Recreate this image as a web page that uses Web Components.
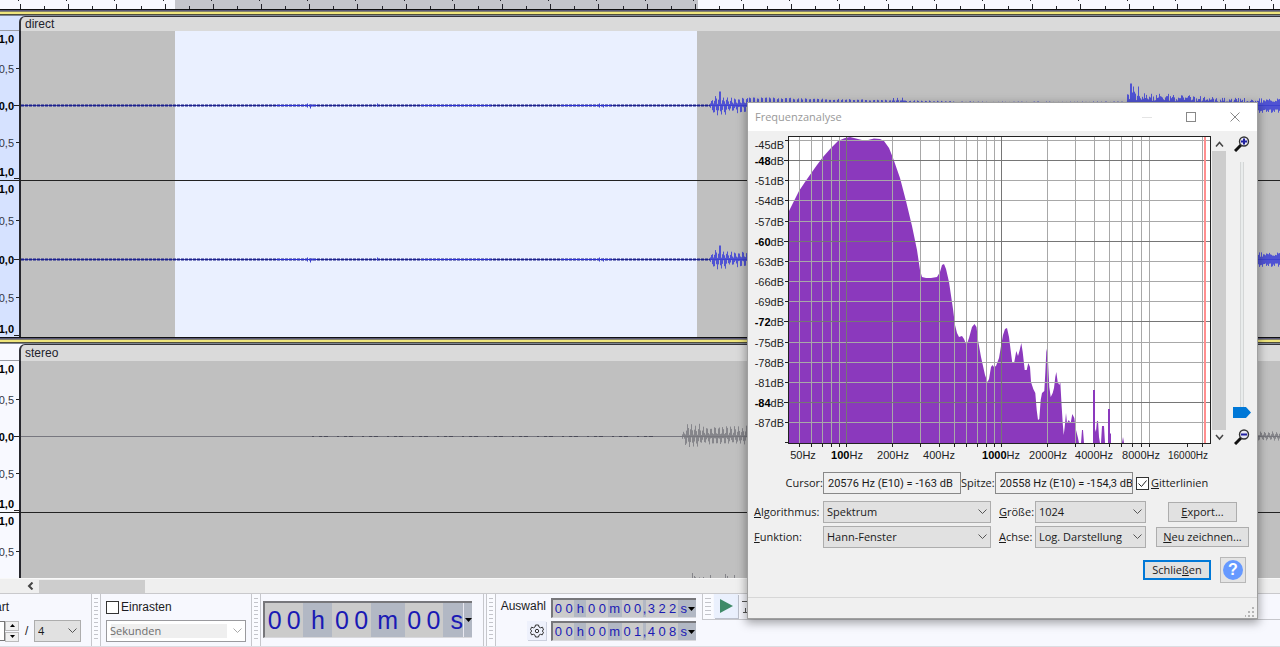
<!DOCTYPE html>
<html lang="de">
<head>
<meta charset="utf-8">
<title>Frequenzanalyse</title>
<style>
html, body { margin: 0; height: 100%; }
body { font: 12px/16px "Liberation Sans", Arial, sans-serif; color: #1b1b22; overflow: hidden; }
</style>
</head>
<body>
<audio-editor></audio-editor>
<script>
const define = (name, html, setup) => customElements.define(name, class extends HTMLElement {
  connectedCallback() {
    if (this.shadowRoot) return;
    const t = document.createElement('template');
    t.innerHTML = html;
    this.attachShadow({ mode: 'open' }).append(t.content.cloneNode(true));
    if (setup) setup(this, this.shadowRoot);
  }
});

/* Repeatable pseudo random numbers for the waveforms. */
const noise = seed => () => (seed = (seed * 16807) % 2147483647) / 2147483647;

/* ---------- time ruler ---------- */
define('time-ruler', `
<style>
:host { display: block; height: 9px; flex: none; background: #f8f9ff; }
svg { display: block; width: 100%; height: 9px; }
</style>
<svg aria-hidden="true"><rect x="175" width="523" height="9" fill="#c4c5cb"/><path stroke="#22222a" fill="none"/></svg>`,
(host, root) => {
  let d = '';
  for (let i = 0; i < 90; i++) {
    const x = Math.round(20.5 + i * 24.1 - .5) + .5;
    d += i % 2 ? `M${x} 6V9` : `M${x} 4V9M${x - 2} 0V1`;
  }
  root.querySelector('path').setAttribute('d', d);
});

/* ---------- one channel of a track: scale and waveform ---------- */
define('wave-channel', `
<style>
:host { display: flex; box-sizing: border-box; }
.scale { width: 19px; flex: none; height: 100%; background: var(--scale-bg); border-right: 2px solid #26262c; box-sizing: content-box; }
.wave { flex: 1; min-width: 0; height: 100%; background: #c0c0c0; }
text { font-size: 11px; text-anchor: end; fill: #33363f; }
.b { font-weight: bold; fill: #000; }
</style>
<svg class="scale"></svg><svg class="wave" aria-hidden="true"></svg>`,
(host, root) => {
  const h = +host.getAttribute('span'), mid = Math.floor(h / 2), kind = host.getAttribute('kind');
  const rows = [[7, '1,0', 1], [Math.round(h / 4), '0,5', 0], [mid, '0,0', 1], [Math.round(h * 3 / 4) - 1, '0,5', 0], [h - 9, '1,0', 1]]
    .slice(0, +(host.getAttribute('labels') || 5));
  let s = '';
  for (const [y, t, b] of rows) {
    s += `<text x="14" y="${y + 5}" class="${b ? 'b' : ''}">${t}</text>`;
    if (t !== '1,0') s += `<path d="M${b ? 14 : 16} ${y + .5}H19" stroke="#222"/>`;
  }
  s += `<path d="M14 ${h - 1.5}H19" stroke="#222"/>`;
  root.querySelector('.scale').innerHTML = s;
  const rnd = noise(77);
  const c = mid + .5;
  let w = '', body = '';
  if (kind === 'direct') {
    w += '<rect x="154" width="522" height="100%" fill="#eaf0ff"/>';
    w += `<path d="M0 ${c}H1300" stroke="#4a4fa8"/>`;
    w += `<path d="M0 ${c}H689" stroke="#1a1f8c" stroke-width="2" stroke-dasharray="3 1"/><path d="M255 ${c}H296M540 ${c}H590M400 ${c}H470" stroke="#2a2fd0"/>`;
    w += `<path d="M286.500 ${c - 2}v4M289.500 ${c - 1}v4M291.500 ${c - 1}v2M356.500 ${c - 2}v3M578.500 ${c - 2}v4M582.500 ${c - 1}v3" stroke="#3a3fd0"/>`;
    for (let x = 689; x < 1300; x++) {
      let up, dn;
      if (x < 728) {
        const beat = .5 + .5 * Math.cos((x - 698) * 1.6);
        const env = x < 691 ? 6 : x < 706 ? 11 : 9;
        up = env * (.2 + .8 * beat) * (.7 + .3 * rnd()); dn = env * (.1 + .9 * (1 - beat)) * (.5 + .5 * rnd());
        if (x === 698 || x === 699) up = 14;
      } else if (x < 1106) {
        const env = 8.500 - Math.min(4.500, (x - 728) * .02);
        up = x % 4 < 2 ? env * (.8 + .2 * rnd()) : 2; dn = up * .8;
        if (x > 870 && x < 890 && rnd() > .7) up += 3;
      } else {
        const env = Math.max(9, 17 - (x - 1106) * .08);
        up = env * (.3 + .55 * rnd()); dn = Math.max(4, env * (.3 + .55 * rnd()));
        if (x === 1109 || x === 1110) up = 22;
        if (x === 1112 || x === 1117) up = 19;
      }
      body += `M${x + .5} ${(c - up).toFixed(1)}V${(c + dn).toFixed(1)}`;
    }
    w += `<path d="${body}" stroke="#3c3fd6" stroke-opacity=".85"/>`;
  } else {
    w += `<path d="M0 ${c}H1300" stroke="#77777f"/>`;
    w += `<path d="M291 ${c}H640" stroke="#4b4b58" stroke-dasharray="2 5 3 2 4 9"/>`;
    const start = host.hasAttribute('late') ? 669 : 661;
    for (let x = start; x < 1300; x++) {
      const beat = .5 + .5 * Math.cos((x - 670) * 1.6);
      const env = x < 664 ? 6 : x < 680 ? 14 : 11;
      const far = x > 1200 ? .5 : 1;
      body += `M${x + .5} ${(c - far * env * (.15 + .85 * beat) * (.75 + .25 * rnd())).toFixed(1)}V${(c + far * env * (.1 + .8 * (1 - beat)) * (.6 + .3 * rnd())).toFixed(1)}`;
    }
    w += `<path d="${body}" stroke="#77777d" stroke-opacity=".8"/>`;
    if (host.hasAttribute('late')) w += '<path d="M671.500 60v6M673.500 63v3M682.500 64v2M689.500 62v4M704.500 61v5M706.500 63v3M713.500 62v4" stroke="#85858a"/>';
  }
  root.querySelector('.wave').innerHTML = w;
});

/* ---------- audio track with its name bar ---------- */
define('audio-track', `
<style>
:host { display: block; flex: none; }
.focus { height: 7px; background: linear-gradient(#111 0 1px, #5a5878 1px 2px, #85826c 2px 3px, #efe57c 3px 5px, #504e3c 5px 6px, #7d8490 6px 7px); }
.bar { display: flex; height: var(--bar, 15px); background: var(--scale-bg); }
.corner { width: 19px; flex: none; border-bottom: 1px solid #9a9ca4; }
.name { flex: 1; background: #dadada; border-top: 1px solid #33333a; border-left: 2px solid #33333a; border-top-left-radius: 6px; padding-left: 4px; line-height: var(--bar, 15px); color: #22222c; }
</style>
<div class="focus"></div>
<div class="bar"><div class="corner"></div><div class="name"><slot name="title"></slot></div></div>
<slot></slot>`);

/* ---------- horizontal scroll bar ---------- */
define('scroll-strip', `
<style>
:host { display: flex; flex: none; height: 16px; box-sizing: border-box; background: #efefef; border-top: 1px solid #f8f8f8; border-bottom: 1px solid #c9c9cc; padding-left: 22px; align-items: center; }
button { width: 17px; height: 14px; border: 0; padding: 0; background: none; display: grid; place-items: center; }
i { width: 106px; height: 13px; background: #cdcdcd; }
</style>
<button aria-label="Nach links"><svg width="7" height="8"><path d="M5.500 .5L2 4l3.500 3.500" fill="none" stroke="#444" stroke-width="2"/></svg></button><i></i>`);

/* ---------- drop-down with label ---------- */
define('combo-box', `
<style>
:host { display: inline-block; flex: none; }
label { display: flex; align-items: center; }
.l { width: var(--label, 0px); flex: none; white-space: nowrap; }
.l:not(.on) { display: none; }
.box { display: grid; width: var(--width); align-items: center; }
.box > * { grid-area: 1 / 1; }
select { appearance: none; box-sizing: border-box; width: 100%; height: 22px; margin: 0; padding: 0 16px 0 3px; border: 1px solid #adadad; border-radius: 0; background: #e1e1e1; color: #1a1a1a; font: inherit; opacity: 1; }
select:disabled { color: #6d6d6d; background: linear-gradient(#efefef, #efefef) 4px 3px / 116px 14px no-repeat #fff; border-color: #9a9a9e; }
svg { justify-self: end; margin-right: 4px; pointer-events: none; }
</style>
<label><span class="l"><slot></slot></span><span class="box"><select><option></option></select>
<svg width="9" height="6"><path d="M.5 .5l4 4 4-4" fill="none" stroke="#555"/></svg></span></label>`,
(host, root) => {
  root.querySelector('option').textContent = host.getAttribute('value');
  const sel = root.querySelector('select');
  if (host.hasAttribute('disabled')) { sel.disabled = true; root.querySelector('path').setAttribute('stroke', '#aaa'); }
  if (host.childNodes.length) root.querySelector('.l').classList.add('on');
  else sel.setAttribute('aria-label', host.getAttribute('hint'));
});

/* ---------- tick box ---------- */
define('tick-box', `
<style>
:host { display: inline-block; flex: none; }
label { display: flex; align-items: center; gap: 2px; white-space: nowrap; }
.m { display: grid; place-items: center; }
.m > * { grid-area: 1 / 1; }
input { appearance: none; width: 13px; height: 13px; margin: 0; border: 1px solid #333; background: #fff; box-sizing: border-box; }
svg { display: none; pointer-events: none; }
input:checked + svg { display: block; }
</style>
<label><span class="m"><input type="checkbox"><svg width="11" height="11"><path d="M1.500 5.500l3 3 5-6" fill="none" stroke="#222"/></svg></span><span><slot></slot></span></label>`,
(host, root) => { root.querySelector('input').checked = host.hasAttribute('checked'); });

/* ---------- time display ---------- */
define('time-field', `
<style>
:host { display: flex; box-sizing: border-box; flex: none; width: var(--w, 145px); height: var(--h, 20px); border: 2px solid; border-color: #77777b #d8d8dc #d8d8dc #77777b; border-width: 2px 0 1px 2px; background: #b2b8c4; color: #1a1ab4; font-size: var(--size, 13px); }
span { display: flex; align-items: center; justify-content: center; }
.d { flex: 1; background: #cbcbcb; }
.h { width: var(--hw, 12px); } .m { width: var(--mw, 14px); } .s { width: var(--sw, 9px); justify-content: flex-end; } .c { width: 3px; }
button { width: 9px; height: 100%; border: 0; padding: 0; background: #b2b8c4; border-left: var(--edge, 0) solid #e8e8f0; display: grid; place-items: center; }
</style>`,
(host, root) => {
  for (const ch of host.getAttribute('value').replace(/ /g, '')) {
    const s = document.createElement('span');
    s.className = /\d/.test(ch) ? 'd' : ch === ',' ? 'c' : ch;
    s.textContent = ch;
    root.append(s);
  }
  const b = document.createElement('button');
  b.setAttribute('aria-label', 'Format');
  b.innerHTML = '<svg width="7" height="4" style="display:block"><path d="M0 0h7L3.500 4z" fill="#000"/></svg>';
  root.append(b);
});

/* ---------- toolbar handle ---------- */
define('tool-grip', `
<style>
:host { display: block; box-sizing: border-box; flex: none; width: 10px; border: 1px solid #c6c7cc; border-width: 0 1px; background: #fafbff; padding: 4px 2px; }
i { display: block; height: 100%; background: repeating-linear-gradient(#c3c4ca 0 1px, transparent 1px 4px); }
</style><i></i>`);

/* ---------- bottom toolbars ---------- */
define('tool-dock', `
<style>
:host { display: flex; flex: 1; background: #f7f8fe; box-sizing: border-box; border-bottom: 1px solid #dcdde2; min-height: 0; align-items: stretch; }
section { box-sizing: border-box; flex: none; display: flex; }
.col { flex-direction: column; gap: 5px; padding-top: 5px; }
.tempo { width: 91px; overflow: hidden; }
.cut { display: flex; width: 9px; justify-content: flex-end; line-height: 16px; }
.row { display: flex; align-items: center; }
.num { width: 5px; height: 20px; box-sizing: border-box; padding: 0; border: 1px solid #777; border-left: 0; background: #fff; }
.spin { display: grid; gap: 1px; width: 14px; margin-right: 6px; }
.spin button { height: 10px; padding: 0; border: 1px solid #bbb; background: #f0f0f0; display: grid; place-items: center; }
.slash { width: 9px; }
.ui { font: 11px/16px "Open Sans", sans-serif; }
.snap { width: 150px; padding-left: 5px; }
.big { width: 222px; padding: 7px 0 0 2px; --w: 209px; --h: 37px; --size: 25px; --hw: 29px; --mw: 34px; --sw: 20px; --edge: 1px; }
.gap { width: 3px; border-left: 1px solid #c6c7cc; }
.sel { width: 206px; display: grid; grid-template-columns: 44px 145px; column-gap: 5px; row-gap: 3px; padding: 4px 0 0 6px; align-content: start; justify-items: end; }
.gear { width: 19px; height: 19px; border: 0; padding: 0; background: #eef1fc; box-shadow: 1px 1px #ccd0de; display: grid; place-items: center; }
.play { height: 26px; flex: 1; border-left: 1px solid #c6c7cc; border-bottom: 1px solid #c6c7cc; }
.play tool-grip { border: 0; margin-right: 1px; }
.play button { width: 24px; height: 24px; border: 0; padding: 0; background: #eaf0fd; box-shadow: 1px 1px #bcc0cc; display: grid; place-items: center; margin-right: 4px; }
</style>
<section class="col tempo">
  <div class="cut">art</div>
  <div class="row"><input class="num" aria-label="Takt"><span class="spin"><button aria-label="Mehr"><svg width="5" height="3"><path d="M0 3h5L2.500 0z"/></svg></button><button aria-label="Weniger"><svg width="5" height="3"><path d="M0 0h5L2.500 3z"/></svg></button></span><span class="slash">/</span><combo-box class="ui" value="4" hint="Schläge" style="--width:47px"></combo-box></div>
</section>
<tool-grip></tool-grip>
<section class="col snap"><tick-box>Einrasten</tick-box><combo-box class="ui" value="Sekunden" hint="Einrasten auf" disabled style="--width:140px"></combo-box></section>
<tool-grip></tool-grip>
<section class="big"><time-field value="00 h 00 m 00 s"></time-field></section>
<section class="gap"></section>
<tool-grip></tool-grip>
<section class="sel"><span>Auswahl</span><time-field value="00 h 00 m 00,322 s"></time-field>
<button class="gear" aria-label="Einstellungen"><svg width="14" height="14" viewBox="0 0 14 14" fill="none" stroke="#333"><path d="M5.500 1h3l.5 2 1.500.8 2-.6L13.500 6l-1.400 1 1.400 1.200-1.200 2.600-2-.5L9 11.200 8.500 13h-3L5 11.200l-1.500-.9-2 .5L.5 8.200 1.900 7 .5 5.800l1-2.600 2 .6L5 3z"/><circle cx="7" cy="7" r="1.700"/></svg></button><time-field value="00 h 00 m 01,408 s"></time-field></section>
<section class="play"><tool-grip></tool-grip><button aria-label="Wiedergabe"><svg width="14" height="14"><path d="M1 0l13 7-13 7z" fill="#3f8a68"/></svg></button><svg width="70" height="24"><path d="M0 7.500H10M1 18.500H10M3.500 14v4" stroke="#555" fill="none"/></svg></section>`);

/* ---------- spectrum chart ---------- */
define('spectrum-plot', `
<style>
:host { display: block; flex: none; }
svg { display: block; }
text { font-size: 11px; fill: #222; }
.b { font-weight: bold; fill: #000; }
</style>
<svg width="464" height="335" viewBox="748 131 464 335" role="img"></svg>`,
(host, root) => {
  const X = f => 846.3 + 155 * Math.log10(f / 100), Y = k => 140.4 + 20.17 * k;
  const snap = v => Math.floor(v) + .5;
  const pts = '789 211 799 191 805 182 812 172 817 165 823 157 831 148 838 141 845 138 850 137 854 138 862 140 868 140 874 138.5 880 139 884 141 889 148 893 158 900 178 906 201 912 226 917 250 920 270 922 277 926 278 931 278 937 277 940 272 942 265 944 264 946 269 949 282 953 309 955 325 957 333 959 337 962 336 964 339 966.5 345 969 338 972 327 974.5 324 976.5 327 978 340 981 357 985 375 987.5 382 989 379 991 367 992.5 365 994 367 996 366 999 358 1001 346 1003 335 1005 329 1007 328 1009 337 1011 353 1012.3 363 1014.3 362 1016.3 351 1018 356 1019.7 350 1021.3 343 1022.7 352 1024.7 370 1026.7 370 1028.3 363 1030 367 1031 382 1033.3 389 1035.3 393 1036.7 410 1038 420 1039.3 419 1040.7 400 1042 393 1044.3 391 1045.3 373 1046.3 352 1047.3 347 1048.3 367 1049.3 387 1050.7 397 1052.7 393 1054 388 1055.3 377 1056.3 372 1057.7 382 1059.3 385 1060.3 382 1061.7 407 1062.7 423 1063.7 435 1064.7 427 1066 413 1067 423 1068.7 420 1070.7 423 1072.3 414 1074.3 418 1076 430 1078 438 1079 443';
  let s = '<rect x="789" y="137" width="421" height="306" fill="#fff"/>';
  let spikes = 'M1081 443l1-13h1l1 13zM1095 443v-14l1 3v-1l1-10h1l1 16 1 6zM1101 443l1-17h2l1 17zM1110 443v-10l1 1v9zM1122 443l1-6 1 6z';
  s += `<path fill="#8b39bd" d="M789 443L${pts}Z${spikes}"/>`;
  let minor = '', major = '', tick = '';
  for (const dec of [10, 100, 1000]) for (let n = 1; n < 10; n++) {
    const f = dec * n; if (f < 45) continue;
    const p = `M${snap(X(f))} 137V443`;
    n === 1 ? major += p : minor += p;
    tick += `M${snap(X(f))} 444v3`;
  }
  for (const f of [16000, 20000]) tick += `M${snap(X(f))} 444v3`;
  minor += `M${snap(X(20000))} 137V443`;
  let labels = '';
  for (let k = 0; k < 16; k++) {
    const y = Math.floor(Y(k)) + .5, m = [1, 5, 9, 13].includes(k);
    tick += `M${m ? 784 : 785} ${y}h4`;
    if (k === 15) break;
    const p = `M789 ${y}H1210`;
    m ? major += p : minor += p;
    labels += `<text x="784" y="${k ? y + 4 : 149}" text-anchor="end"><tspan class="${m ? 'b' : ''}">-${45 + 3 * k}</tspan>dB</text>`;
  }
  for (const [x, n] of [[803, 50], [847, 100], [893, 200], [939, 400], [1001, 1000], [1048, 2000], [1094, 4000], [1141, 8000], [1188, 16000]])
    labels += `<text x="${x}" y="459" text-anchor="middle"${n === 16000 ? ' style="font-size:10px"' : ''}><tspan class="${n === 100 || n === 1000 ? 'b' : ''}">${n}</tspan>Hz</text>`;
  s += `<path d="${minor}" stroke="#a8a8a8"/><path d="${major}" stroke="#767676"/>`;
  s += '<path d="M1094 443V390M1109 443V409" stroke="#8b39bd" stroke-width="2"/>';
  s += '<path d="M1205 137V443" stroke="#ff8f8f" stroke-width="2"/>';
  s += `<path d="${tick}" stroke="#222"/><rect x="788.500" y="136.500" width="422" height="307" fill="none" stroke="#222"/>` + labels;
  root.querySelector('svg').innerHTML = s;
});

/* ---------- vertical scroll bar and zoom slider ---------- */
define('plot-controls', `
<style>
:host { display: flex; flex: 1; }
.bar { display: flex; flex-direction: column; width: 14px; align-items: center; padding: 6px 0 22px; }
.bar button, .zoom button { border: 0; padding: 0; background: none; display: grid; place-items: center; width: 14px; height: 14px; flex: none; }
.bar i { flex: 1; width: 14px; background: #cdcdcd; }
.zoom { display: flex; flex-direction: column; align-items: center; width: 32px; padding-top: 4px; }
.zoom button { width: 18px; height: 17px; }
input { appearance: none; writing-mode: vertical-lr; width: 18px; height: 256px; margin: 10px 0; background: linear-gradient(90deg, #d4d6d6 1px, #e9ecec 1px 3px, #d4d6d6 3px) center / 4px 100% no-repeat; }
input::-webkit-slider-thumb { appearance: none; width: 18px; height: 11px; background: #0078d7; clip-path: polygon(0 0, 72% 0, 100% 50%, 72% 100%, 0 100%); }
</style>
<div class="bar"><button aria-label="Nach oben"><svg width="9" height="7"><path d="M1 5.500l3.500-4 3.500 4" fill="none" stroke="#444" stroke-width="1.500"/></svg></button><i></i><button aria-label="Nach unten"><svg width="9" height="7"><path d="M1 1l3.500 4L8 1" fill="none" stroke="#444" stroke-width="1.500"/></svg></button></div>
<div class="zoom">
<button aria-label="Vergrößern"><svg width="16" height="16"><path d="M1 15l6-6" stroke="#111" stroke-width="3"/><circle cx="10" cy="5.500" r="4.500" fill="#e8e8f4" stroke="#333" stroke-width="1.400"/><path d="M7 5.500h6M10 2.500v6" stroke="#2020a0" stroke-width="2"/></svg></button>
<input type="range" value="100" aria-label="Zoom">
<button aria-label="Verkleinern"><svg width="16" height="16"><path d="M1 15l6-6" stroke="#111" stroke-width="3"/><circle cx="10" cy="5.500" r="4.500" fill="#e8e8f4" stroke="#333" stroke-width="1.400"/><path d="M7 5.500h6" stroke="#2020a0" stroke-width="2"/></svg></button>
</div>`);

/* ---------- frequency analysis window ---------- */
define('frequency-window', `
<style>
:host { display: flex; flex-direction: column; box-sizing: border-box; width: 509px; background: #f0f0f0; box-shadow: 0 0 0 1px #a0a0a0, 0 3px 9px 2px rgba(0,0,0,.35); font: 11px/16px "Open Sans", sans-serif; color: #1a1a1a; }
header { display: flex; align-items: center; height: 28px; background: #fff; color: #999; padding-left: 7px; }
header span { flex: 1; }
header button { width: 44px; height: 28px; border: 0; padding: 0; background: none; display: grid; place-items: center; }
.plot { display: flex; height: 335px; font-family: "Liberation Sans", Arial, sans-serif; }
.row { display: flex; align-items: center; }
.read { height: 22px; margin-top: 6px; padding-left: 36px; }
.read label { display: flex; align-items: center; white-space: nowrap; }
.read span { flex: 1; text-align: right; }
.c { width: 177px; } .s { width: 171px; margin-right: 4px; }
input { box-sizing: border-box; width: 138px; height: 22px; padding: 0 0 0 4px; border: 1px solid #888; background: #f0f0f0; font: 11px Roboto, sans-serif; color: inherit; }
.form { display: grid; grid-template-columns: 245px 157px 1fr; row-gap: 3px; margin: 7px 8px 0 6px; align-items: center; justify-items: start; }
.a { --label: 69px; --width: 168px; } .g { --label: 36px; --width: 111px; }
.btn { font: inherit; color: inherit; background: #e1e1e1; border: 1px solid #adadad; height: 20px; padding: 0; justify-self: center; }
.end { justify-content: flex-end; gap: 9px; margin: 9px 11px 0 0; height: 26px; }
.close { width: 68px; border: 2px solid #0078d7; }
.help { width: 26px; height: 26px; padding: 0; border: 1px solid #b8b8b8; background: #e4e4e4; display: grid; place-items: center; }
.help b { width: 20px; height: 20px; border-radius: 50%; background: #6699ff; color: #fff; font-size: 16px; line-height: 20px; }
footer { height: 20px; margin-top: 14px; border-top: 1px solid #d7d7d7; display: flex; justify-content: flex-end; align-items: flex-end; }
</style>
<header><span>Frequenzanalyse</span>
<button aria-label="Minimieren"><svg width="10" height="10"><path d="M0 5.500h10" stroke="#e4e4e4"/></svg></button>
<button aria-label="Maximieren"><svg width="10" height="10"><rect x=".5" y=".5" width="9" height="9" fill="none" stroke="#888"/></svg></button>
<button aria-label="Schließen"><svg width="10" height="10"><path d="M.5 .5l9 9M9.500 .5l-9 9" stroke="#888"/></svg></button></header>
<div class="plot"><spectrum-plot></spectrum-plot><plot-controls></plot-controls></div>
<div class="row read">
<label class="c"><span>Cursor:</span><input readonly value="20576 Hz (E10) = -163 dB"></label>
<label class="s"><span>Spitze:</span><input readonly value="20558 Hz (E10) = -154,3 dB"></label>
<tick-box checked><u>G</u>itterlinien</tick-box></div>
<div class="form">
<combo-box class="a" value="Spektrum"><u>A</u>lgorithmus:</combo-box>
<combo-box class="g" value="1024"><u>G</u>röße:</combo-box>
<button class="btn" style="width:69px"><u>E</u>xport...</button>
<combo-box class="a" value="Hann-Fenster"><u>F</u>unktion:</combo-box>
<combo-box class="g" value="Log. Darstellung"><u>A</u>chse:</combo-box>
<button class="btn" style="width:93px"><u>N</u>eu zeichnen...</button>
</div>
<div class="row end"><button class="btn close">Schlie<u>ß</u>en</button><button class="help" aria-label="Hilfe"><b>?</b></button></div>
<footer><svg width="12" height="12"><path d="M7 2h2M7 6h2M3 6h2M7 10h2M3 10h2M-1 10h2" stroke="#b5b5b5" stroke-width="2"/></svg></footer>`);

/* ---------- whole editor ---------- */
define('audio-editor', `
<style>
:host { display: flex; flex-direction: column; position: relative; height: 100%; min-height: 600px; overflow: hidden; }
.tracks { flex: 1; min-height: 0; overflow: hidden; display: flex; flex-direction: column; background: #c0c0c0; }
.one { --scale-bg: #d6e2ff; } .two { --scale-bg: #f8f9ff; --bar: 17px; }
.line { border-bottom: 1px solid #222; }
tool-dock { flex: 0 0 53px; }
frequency-window { position: absolute; left: 748px; top: 103px; }
</style>
<time-ruler></time-ruler>
<div class="tracks">
<audio-track class="one"><span slot="title">direct</span>
<wave-channel class="line" kind="direct" span="149" style="height:150px"></wave-channel>
<wave-channel kind="direct" span="156" style="height:156px"></wave-channel></audio-track>
<audio-track class="two"><span slot="title">stereo</span>
<wave-channel class="line" kind="stereo" span="151" style="height:152px"></wave-channel>
<wave-channel kind="stereo" span="152" labels="2" late style="height:152px"></wave-channel></audio-track>
</div>
<scroll-strip></scroll-strip>
<tool-dock></tool-dock>
<frequency-window></frequency-window>`);
</script>
</body>
</html>
